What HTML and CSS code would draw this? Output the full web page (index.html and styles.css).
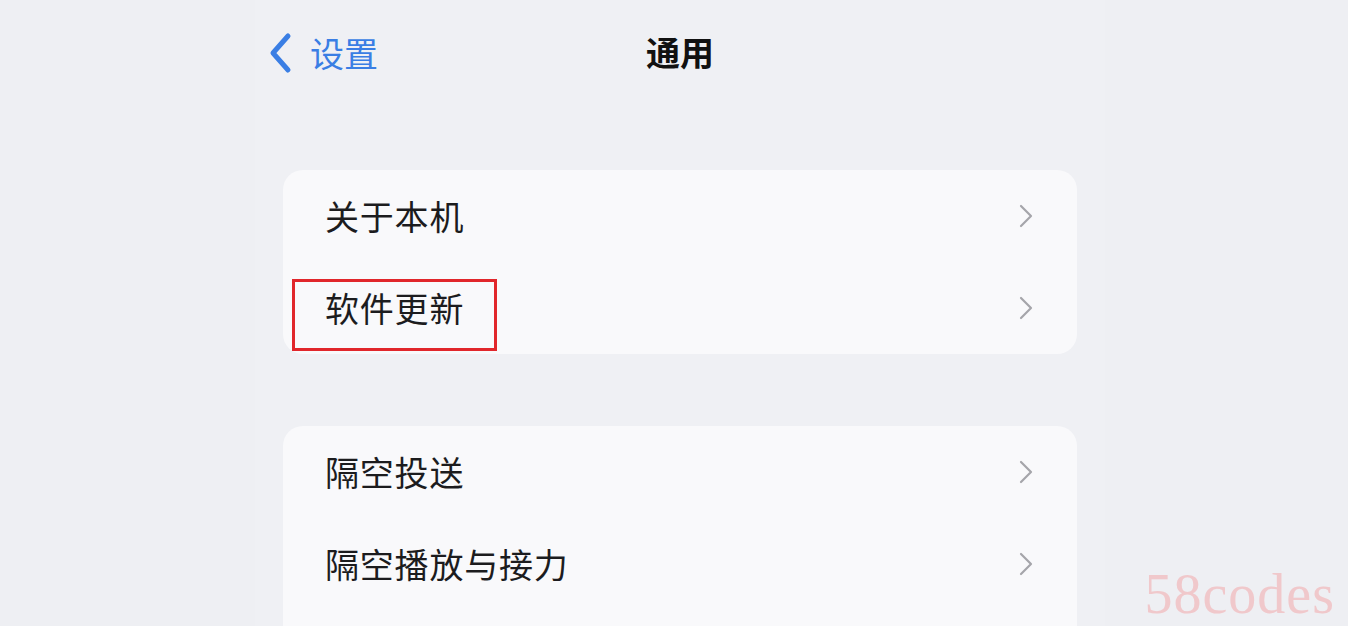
FILE: index.html
```html
<!doctype html>
<html lang="zh-cn">
<head>
  <meta charset="UTF-8">
  <meta name="viewport" content="width=device-width, initial-scale=1.0">
  <title>通用</title>
  <link rel="stylesheet" href="styles.css">
</head>
<body>
<div class="screen">
  <header class="nav-bar">
    <a class="nav-back">
      <svg class="nav-back-icon" viewBox="0 0 26 42" width="26" height="42">
        <path d="M21 4 L6 21 L21 38" fill="none" stroke="currentColor" stroke-width="5" stroke-linecap="round" stroke-linejoin="round"/>
      </svg>
      <span>设置</span>
    </a>
    <h1 class="nav-title">通用</h1>
  </header>

  <section class="group">
    <div class="row">
      <span class="row-label">关于本机</span>
      <svg class="row-chevron" viewBox="0 0 14 24" width="14" height="24">
        <path d="M2 2 L12 12 L2 22" fill="none" stroke="currentColor" stroke-width="2.2" stroke-linecap="round" stroke-linejoin="round"/>
      </svg>
    </div>
    <div class="row">
      <span class="row-label">软件更新</span>
      <span class="mark-box"></span>
      <svg class="row-chevron" viewBox="0 0 14 24" width="14" height="24">
        <path d="M2 2 L12 12 L2 22" fill="none" stroke="currentColor" stroke-width="2.2" stroke-linecap="round" stroke-linejoin="round"/>
      </svg>
    </div>
  </section>

  <section class="group group-second">
    <div class="row">
      <span class="row-label">隔空投送</span>
      <svg class="row-chevron" viewBox="0 0 14 24" width="14" height="24">
        <path d="M2 2 L12 12 L2 22" fill="none" stroke="currentColor" stroke-width="2.2" stroke-linecap="round" stroke-linejoin="round"/>
      </svg>
    </div>
    <div class="row">
      <span class="row-label">隔空播放与接力</span>
      <svg class="row-chevron" viewBox="0 0 14 24" width="14" height="24">
        <path d="M2 2 L12 12 L2 22" fill="none" stroke="currentColor" stroke-width="2.2" stroke-linecap="round" stroke-linejoin="round"/>
      </svg>
    </div>
    <div class="row"></div>
  </section>
</div>
<div class="watermark">58codes</div>
</body>
</html>
```

FILE: styles.css
```css
html, body {
  margin: 0;
  height: 100%;
  overflow: hidden;
}

body {
  background: #eeeff3;
  font-family: "Noto Sans CJK SC", "Noto Sans", sans-serif;
  color: #1c1c1e;
}

.screen {
  width: 850px;
  margin-left: 255px;
  padding: 0 28px;
  box-sizing: border-box;
  background: #eff0f4;
  min-height: 100%;
}

.nav-bar {
  position: relative;
  height: 106px;
  display: flex;
  align-items: center;
  justify-content: center;
}

.nav-back {
  position: absolute;
  left: -16px;
  top: 32px;
  display: flex;
  align-items: center;
  gap: 17px;
  color: #3a7ee4;
  font-size: 34px;
  line-height: 42px;
}

.nav-back-icon {
  display: block;
}

.nav-title {
  margin: 0;
  font-size: 34px;
  font-weight: 700;
  color: #111;
  margin-top: -4px;
}

.group {
  margin-top: 64px;
  background: #f9f9fb;
  border-radius: 20px;
}

.group-second {
  margin-top: 72px;
}

.row {
  position: relative;
  height: 92px;
  display: flex;
  align-items: center;
  justify-content: space-between;
  padding: 0 44px 0 42px;
}

.row-label {
  font-size: 34px;
  line-height: 40px;
  letter-spacing: 0.8px;
}

.row-chevron {
  color: #a5a5aa;
  display: block;
}

.mark-box {
  position: absolute;
  left: 9px;
  top: 17px;
  width: 205px;
  height: 72px;
  border: 3px solid #e1262b;
  box-sizing: border-box;
}

.watermark {
  position: absolute;
  right: 13px;
  bottom: 0;
  font-family: "Liberation Serif", serif;
  font-size: 56px;
  color: #f0c8cb;
  letter-spacing: 1px;
}
```
